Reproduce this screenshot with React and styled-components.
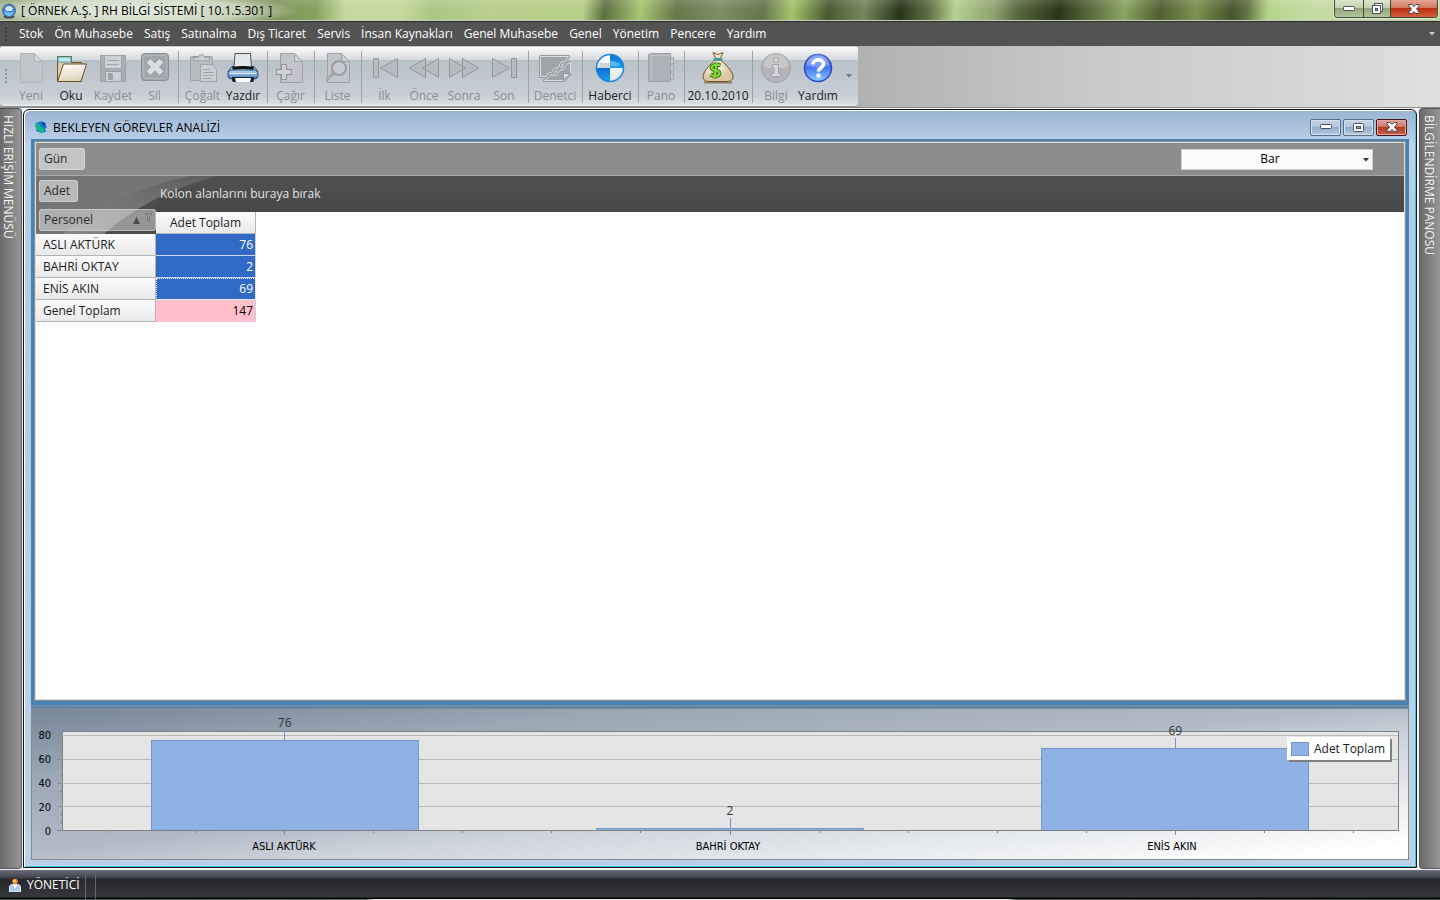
import React from "react";
import styled, { createGlobalStyle, css } from "styled-components";

const GlobalStyle = createGlobalStyle`
  *, *::before, *::after { box-sizing: border-box; }
  body { margin: 0; font: 12px/16px "Open Sans", sans-serif; color: #1c1c1c; }
  button, select { font: inherit; color: inherit; }
  button { padding: 0; border: 0; background: none; }
  svg { display: block; flex: none; }
`;

/* ---------- data ---------- */

const MENU = [
  "Stok", "Ön Muhasebe", "Satış", "Satınalma", "Dış Ticaret", "Servis",
  "İnsan Kaynakları", "Genel Muhasebe", "Genel", "Yönetim", "Pencere", "Yardım",
];

const ROWS = [
  { name: "ASLI AKTÜRK", value: 76 },
  { name: "BAHRİ OKTAY", value: 2 },
  { name: "ENİS AKIN", value: 69, focused: true },
];

/* ---------- shell ---------- */

const Shell = styled.div`
  min-height: 100vh;
  display: flex;
  flex-direction: column;
  background: #d2d2d2;
`;

const TitleBar = styled.header`
  height: 22px;
  display: flex;
  align-items: flex-start;
  padding-right: 2px;
  border-bottom: 1px solid #2c2e28;
  box-shadow: inset 0 -1px #c3cbb8;
  background:
    radial-gradient(closest-side, rgba(255, 255, 255, 0.75), rgba(255, 255, 255, 0.5) 70%, transparent) -30px -6px / 330px 34px no-repeat,
    linear-gradient(rgba(255, 255, 255, 0.12), transparent 50%),
    linear-gradient(97deg,
      #93a57a 0, #a5b58a 12%, #7d945c 19%, #86a25c 22%, #c5da9c 24%, #c5da9c 28%, #aac884 30%, #b8d08c 34%,
      #b6cf88 40.5%, #5b7040 42%, #a9c674 44.5%, #66784a 47%, #7e8e66 50%, #65764c 53%, #a5c56c 55%, #4a5a32 57.5%,
      #75885a 60%, #29341a 62.5%, #5e7044 64.5%, #b4d28e 66.3%, #8fa272 69%, #5a6a40 70.6%, #2b3418 73.5%, #55663a 75.5%,
      #8ba662 78%, #525f32 80.5%, #7c9250 83%, #48552e 85.5%, #5f7040 86.5%, #b4d48a 88%, #c6dca6 91%, #bcd69a 100%);
`;

const AppTitle = styled.h1`
  display: flex;
  align-items: center;
  gap: 4px;
  margin: 0;
  padding: 2px 0 0 1px;
  font-size: 12px;
  line-height: 18px;
  font-weight: 400;
  color: #000;
`;

const AppControls = styled.div`
  display: flex;
  margin-left: auto;
  border: 1px solid #40483a;
  border-top: 0;
  border-radius: 0 0 4px 4px;
  overflow: hidden;
  box-shadow: 0 0 0 1px rgba(255, 255, 255, 0.5);
`;

const AppControl = styled.button`
  width: ${(p) => p.$w}px;
  height: 17px;
  display: grid;
  place-items: center;
  border-left: ${(p) => (p.$first ? 0 : "1px solid #40483a")};
  background: ${(p) =>
    p.$close
      ? "linear-gradient(#e5a795, #d27860 45%, #bb2f12 50%, #d8603c)"
      : "linear-gradient(#dbe7cb, #c3d2ae 45%, #94a67c 50%, #b0c698)"};
`;

const MenuBar = styled.nav`
  height: 24px;
  display: flex;
  align-items: center;
  padding: 0 5px 0 4px;
  background: #535353;
`;

const MenuList = styled.ul`
  display: flex;
  gap: 11px;
  flex: 1;
  margin: 0;
  padding: 0 0 0 12px;
  list-style: none;
`;

const MenuItem = styled.button`
  font-size: 12px;
  line-height: 16px;
  white-space: nowrap;
  color: #fff;
`;

const ToolArea = styled.div`
  height: 62px;
  display: flex;
  background: linear-gradient(90deg, #adadad 0, #b2b2b2 60%, #cacaca 77%, #dfdfdf 100%);
  border-bottom: 1px solid #8b8b8b;
`;

const ToolStrip = styled.div`
  display: flex;
  align-items: stretch;
  border-radius: 4px;
  border-bottom: 1px solid #8a9096;
  background: linear-gradient(#c8c8c8 1px, #ffffff 1px, #f3f4f5 3px, #d6d9dd 14px, #b9c1c9 14px, #c8ced4 49px, #d9dfe1 58px, #eef0f1);
`;

const Grip = styled.span`
  width: ${(p) => p.$w}px;
  height: 16px;
  align-self: center;
  background: radial-gradient(circle, ${(p) => p.$color} 1px, transparent 1px) 0 0 / 4px 4px repeat-y;
  margin-left: ${(p) => p.$ml || 0}px;
`;

const ToolButton = styled.button`
  width: ${(p) => p.$w}px;
  display: flex;
  flex-direction: column;
  align-items: center;
  padding-top: 6px;
  gap: 4px;
  font-size: 12px;
  line-height: 16px;
  white-space: nowrap;
  color: #1e2226;
  &:disabled { color: #8b8f94; }
`;

const ToolSeparator = styled.span`
  width: 1px;
  height: 52px;
  margin: 5px 3px 0 4px;
  background: #9da2a8;
`;

const Overflow = styled.button`
  width: 18px;
  display: grid;
  place-items: center;
`;

/* ---------- desktop ---------- */

const Desktop = styled.main`
  flex: 1;
  display: flex;
  gap: 1px;
  background: #f4f4f4;
`;

const SideTab = styled.button`
  width: ${(p) => (p.$right ? 21 : 22)}px;
  margin-bottom: 1px;
  padding: ${(p) => (p.$right ? "6px 2px 0 0" : "6px 6px 0 0")};
  display: flex;
  justify-content: flex-start;
  align-items: center;
  writing-mode: vertical-rl;
  font-size: 12px;
  line-height: 14px;
  color: #f5f5f5;
  border: 1px solid #555;
  border-width: ${(p) => (p.$right ? "1px 0 1px 1px" : "1px 1px 1px 0")};
  border-radius: ${(p) => (p.$right ? "4px 0 0 4px" : "0 4px 4px 0")};
  background: linear-gradient(90deg, #6a6a6a, #969696);
`;

const Window = styled.section`
  flex: 1;
  min-width: 0;
  display: flex;
  flex-direction: column;
  margin: 1px 1px 2px 0;
  padding: 0 7px 7px;
  border: 1px solid #141414;
  border-radius: 6px 6px 0 0;
  box-shadow: inset 1px 1px #fff, inset -1px -1px #35c8dc;
  background: linear-gradient(#9ab4d1, #bdd2ea 34px, #b3cbe6 120px, #b9d1ea);
`;

const WindowTitle = styled.div`
  height: 29px;
  display: flex;
  align-items: center;
  padding: 5px 2px 0 3px;
  h2 {
    margin: 0 auto 0 5px;
    padding-top: 2px;
    font-size: 12px;
    line-height: 16px;
    font-weight: 400;
    color: #000;
  }
`;

const WindowControls = styled.div`
  display: flex;
  gap: 2px;
`;

const WindowControl = styled.button`
  width: 31px;
  height: 17px;
  display: grid;
  place-items: center;
  border-radius: 2px;
  border: 1px solid ${(p) => (p.$close ? "#4c1418" : "#5a6c86")};
  box-shadow: inset 0 0 0 1px ${(p) => (p.$close ? "#e0a8a0" : "#d5e2f0")};
  background: ${(p) =>
    p.$close
      ? "linear-gradient(#e3a59a, #cf7466 45%, #b03a24 50%, #c96452)"
      : "linear-gradient(#c2d3e6, #b2c8df 45%, #94aecb 50%, #b4cbe3)"};
`;

/* ---------- pivot ---------- */

const PivotFrame = styled.div`
  flex: 1;
  display: flex;
  flex-direction: column;
  border: solid #4682b4;
  border-width: 2px 3px 4px;
`;

const Splitter = styled.div`
  height: 3px;
  border-bottom: 1px solid #4682b4;
  background: conic-gradient(#9a9a9a 25%, #4682b4 0 50%, #9a9a9a 0 75%, #4682b4 0) 0 0 / 2px 2px;
`;

const Pivot = styled.div`
  flex: 1;
  border: 1px solid #8e8e8e;
  box-shadow: inset 0 0 0 1px #dcdcdc;
  padding: 1px;
  background: #fff;
`;

const FilterBar = styled.div`
  height: 33px;
  display: flex;
  align-items: center;
  justify-content: space-between;
  padding: 0 31px 0 3px;
  border-bottom: 1px solid #a8a8a8;
  background: #8d8d8d;
`;

const FieldButton = styled.button`
  width: ${(p) => p.$w}px;
  height: 22px;
  display: flex;
  align-items: center;
  padding: 0 4px;
  border: 1px solid rgba(225, 225, 225, 0.5);
  border-radius: 3px;
  background: ${(p) => p.$bg};
  color: #2b2b2b;
`;

const SelectWrap = styled.label`
  position: relative;
  display: block;
  svg { position: absolute; right: 4px; top: 9px; pointer-events: none; }
`;

const ChartSelect = styled.select`
  display: block;
  width: 192px;
  height: 21px;
  appearance: none;
  border: 1px solid #cfcfcf;
  border-radius: 0;
  background: #fbfbfb;
  text-align-last: center;
  padding: 0 14px 0 0;
  color: #000;
`;

const PivotBody = styled.div`
  position: relative;
`;

const Swoosh = styled.svg`
  position: absolute;
  left: 0;
  top: 0;
  pointer-events: none;
`;

const ColumnBand = styled.div`
  height: 36px;
  display: flex;
  background: linear-gradient(#505050, #484848);
  color: #e2e2e2;
`;

const DataArea = styled.div`
  position: relative;
  width: 120px;
  padding: 4px 0 0 3px;
`;

const BandHint = styled.p`
  position: relative;
  margin: 0;
  padding: 10px 4px;
`;

const PivotTable = styled.table`
  position: relative;
  width: 220px;
  table-layout: fixed;
  border-collapse: separate;
  border-spacing: 0;
  th, td { height: 22px; padding: 0; line-height: 16px; font-weight: 400; }
`;

const CornerCell = styled.th`
  width: 120px;
  vertical-align: top;
  ${FieldButton} { margin: -3px 0 0 3px; gap: 5px; padding-right: 3px; }
  ${FieldButton} span { margin-right: auto; }
  ${FieldButton} svg:last-child { margin-bottom: 6px; }
`;

const headerLook = css`
  border: solid #b4b4b4;
  border-width: 0 1px 1px 0;
  background: linear-gradient(#fbfbfb, #e9e9e9);
  color: #1c1c1c;
`;

const ColumnHead = styled.th`
  ${headerLook}
  text-align: center;
`;

const RowHead = styled.th`
  ${headerLook}
  && { padding-left: 7px; }
  text-align: left;
`;

const Cell = styled.td`
  text-align: right;
  && { padding-right: 2px; }
  border-bottom: 1px solid ${(p) => (p.$total ? "#ffc0cb" : "#c9d6ea")};
  border-right: 1px solid #c4cfe0;
  background: ${(p) => (p.$total ? "#ffc0cb" : "#316ac5")};
  color: ${(p) => (p.$total ? "#000" : "#fff")};
  ${(p) => p.$focused && "outline: 1px dotted #fff; outline-offset: -1px;"}
`;

/* ---------- chart ---------- */

const ChartPanel = styled.figure`
  height: 152px;
  margin: 0;
  padding: 22px 10px 0 0;
  display: grid;
  grid-template-columns: 30px 1fr;
  grid-template-rows: 100px 1fr;
  position: relative;
  border: 1px solid #8a8a8a;
  background: linear-gradient(to bottom right, #778899 0, #9aa7b5 22%, #b3bbc8 48%, #ced4dc 60%, #ffffff 96%);
  font-size: 11px;
`;

const AxisLabels = styled.div`
  display: flex;
  flex-direction: column-reverse;
  justify-content: space-between;
  margin: -3px 0 -9px;
  padding-right: 11px;
  text-align: right;
  line-height: 16px;
  font-family: "DejaVu Sans Condensed", "DejaVu Sans", sans-serif;
  color: #000;
`;

const Plot = styled.svg`
  width: 100%;
  height: 100px;
  overflow: visible;
  shape-rendering: crispEdges;
  text { font: 12px "Open Sans", sans-serif; fill: #333; text-anchor: middle; }
`;

const Categories = styled.div`
  grid-column: 2;
  display: grid;
  grid-template-columns: repeat(3, 1fr);
  padding: 8px 4px 0 0;
  text-align: center;
  line-height: 16px;
  font-family: "DejaVu Sans Condensed", "DejaVu Sans", sans-serif;
  color: #000;
`;

const Legend = styled.figcaption`
  position: absolute;
  right: 18px;
  top: 28px;
  display: flex;
  align-items: center;
  gap: 5px;
  height: 23px;
  padding: 0 5px 0 4px;
  background: #fff;
  box-shadow: 2px 2px #808080;
  font-size: 12px;
  line-height: 16px;
`;

const Swatch = styled.span`
  width: 18px;
  height: 14px;
  border: 1px solid #7596c8;
  background: #8fb2e6;
`;

/* ---------- status ---------- */

const StatusBar = styled.footer`
  height: 30px;
  display: flex;
  align-items: stretch;
  padding-left: 8px;
  border-bottom: 1px solid;
  border-image: linear-gradient(90deg, #4d524c 0, #6f7470 25.5%, #eee 26%, #eee 70%, #556052 70.5%, #3c443a) 1;
  border-width: 0 0 1px;
  background: linear-gradient(#6b6b78, #3d3f48 8px, #26272a 9px, #37383c 27px, #000 28px);
`;

const StatusItem = styled.div`
  display: flex;
  align-items: center;
  gap: 5px;
  padding: 0 5px 0 0;
  border-right: 1px solid #66676b;
  color: #fff;
`;

const StatusGap = styled.span`
  width: 10px;
  border-right: 1px solid #66676b;
`;

/* ---------- icons ---------- */

const Icon = ({ size = 32, children }) => (
  <svg width={size} height={size} viewBox={`0 0 ${size} ${size}`} aria-hidden="true">{children}</svg>
);

const off = { fill: "#b9bcc0", stroke: "#9fa2a6", strokeWidth: 1 };
const pale = { fill: "#cdd0d3", stroke: "#a0a3a7", strokeWidth: 1 };

const NewIcon = () => (
  <Icon><path {...off} fill="#c3c5c8" stroke="#b2b5b8" d="M5.500 1.500h14l8 8v21h-22z" /><path fill="#d5d7d9" stroke="#b0b3b6" d="M19.500 1.500v8h8z" /></Icon>
);

const OpenIcon = () => (
  <Icon>
    <defs>
      <linearGradient id="folder" x1="0" y1="0" x2="0.300" y2="1"><stop offset="0" stopColor="#fff" /><stop offset="1" stopColor="#e3d6bd" /></linearGradient>
    </defs>
    <path d="M2.500 29.500v-25h14v6h10v19z" fill="#d9ccb3" stroke="#6f5224" />
    <path d="M3 5h13v5H3z" fill="#bfe9ec" stroke="#4ea6ae" />
    <path d="M2.500 29.500l6-17.500h23l-5.500 17.500z" fill="url(#folder)" stroke="#6b4d1e" strokeLinejoin="round" />
  </Icon>
);

const SaveIcon = () => (
  <Icon>
    <path {...off} fill="#abaeb2" d="M3.500 3.500h25v26h-25z" />
    <path fill="#cfd1d4" stroke="#a4a7aa" d="M7.500 3.500h17v13h-17z" />
    <path stroke="#a4a7aa" d="M10 8.500h12M10 12.500h12" />
    <path fill="#cfd1d4" stroke="#9b9ea2" d="M8.500 19.500h16v10h-16z" /><path fill="#a0a3a7" d="M11 21h5v7h-5z" />
  </Icon>
);

const DeleteIcon = () => (
  <Icon>
    <rect x="2.500" y="1.500" width="27" height="27" rx="3" fill="#a4a7aa" stroke="#8c8f93" />
    <rect x="4.500" y="3.500" width="23" height="23" rx="1" fill="none" stroke="#b6b9bb" />
    <path fill="#dcdee0" stroke="#9a9da1" d="M7 10.500l4.500-4 4.500 4.500 4.500-4.500 4.500 4-4.500 4.500 4.500 4.500-4.500 4-4.500-4.500-4.500 4.500-4.500-4 4.500-4.500z" />
  </Icon>
);

const CopyIcon = () => (
  <Icon>
    <rect {...off} x="3.500" y="4.500" width="22" height="24" rx="1" />
    <path {...pale} d="M6.500 8.500v-3h5a3 3 0 0 1 6 0h5v3z" />
    <path {...pale} d="M13.500 12.500h11l5 5v12h-16z" />
    <path stroke="#a0a3a7" d="M16 17.500h7M16 20.500h11M16 23.500h11M16 26.500h8" />
  </Icon>
);

const PrintIcon = () => (
  <Icon>
    <defs><linearGradient id="printer" x1="0" y1="0" x2="0" y2="1"><stop offset="0" stopColor="#c2d9f2" /><stop offset="1" stopColor="#3e7cc2" /></linearGradient></defs>
    <path d="M5 14.500h22l4 5H1z" fill="#a9c8ec" stroke="#2a4c74" />
    <path d="M8 1.500h15.500l1 14H7z" fill="#e6e7e9" stroke="#4f5358" />
    <path d="M5.500 16.500q10.500-2 21 0" fill="none" stroke="#0f1113" strokeWidth="3" />
    <path d="M1 22q0-4 5-4h20q5 0 5 4v2q0 3-4 3H5q-4 0-4-3z" fill="url(#printer)" stroke="#23507f" />
    <path d="M5 25h22v3q0 2-3 2H8q-3 0-3-2z" fill="#1d1f22" />
    <path d="M8 26h16l-1 4H9z" fill="#f7f8f9" />
    <path d="M3 21.500h26" stroke="#e3effb" />
  </Icon>
);

const CallIcon = () => (
  <Icon>
    <path {...off} fill="#c3c5c8" d="M5.500 1.500h14l8 8v21h-22z" /><path {...pale} d="M19.500 1.500v8h8z" />
    <path fill="#d0d2d4" stroke="#8f9296" d="M6.500 12.500h5v5h5v5h-5v5h-5v-5h-5v-5h5z" />
  </Icon>
);

const ListIcon = () => (
  <Icon>
    <path {...off} fill="#c3c5c8" d="M5.500 1.500h14l8 8v21h-22z" /><path {...pale} d="M19.500 1.500v8h8z" />
    <path d="M13 20l-8.500 8" stroke="#999ca0" strokeWidth="3" /><path d="M13 20l-8.500 8" stroke="#c8cacd" />
    <circle cx="17" cy="16" r="7" fill="#c8cacd" stroke="#999ca0" strokeWidth="2" />
  </Icon>
);

const nav = { fill: "#b9bcbf", stroke: "#94989d", strokeWidth: 1, strokeLinejoin: "round" };
const FirstIcon = () => <Icon><path {...nav} d="M4.500 6.500h5v19h-5zM11.500 16l17-9.500v19z" /></Icon>;
const PrevIcon = () => <Icon><path {...nav} d="M1.500 16l16-9.500v19zM14.500 16l16-9.500v19z" /></Icon>;
const NextIcon = () => <Icon><path {...nav} d="M17.500 16l-16-9.500v19zM30.500 16l-16-9.500v19z" /></Icon>;
const LastIcon = () => <Icon><path {...nav} d="M28.500 6.500h-5v19h5zM21.500 16l-17-9.500v19z" /></Icon>;

const torn = ["M1.500 4.500h28l-3 5-5 1-2 5-4 1-3 4-4 1-1 3h-6z", "M31.500 10v11l-7 7.500h-19l4-3 2-3 5 1 4-5 4-1 3-5z"];
const AuditIcon = () => (
  <Icon>
    {torn.map((d) => (
      <React.Fragment key={d}>
        <path d={d} fill="#9fa2a5" stroke="#94979b" strokeWidth="3" strokeLinejoin="round" />
        <path d={d} fill="#a2a5a8" stroke="#dcdee0" strokeLinejoin="round" />
      </React.Fragment>
    ))}
    <path d="M24.500 28v-6.500h7z" fill="#dcdee0" stroke="#94979b" />
  </Icon>
);

const MessengerIcon = () => (
  <Icon>
    <defs>
      <linearGradient id="msgWhite" x1="0" y1="0" x2="0" y2="1"><stop offset="0" stopColor="#fff" /><stop offset="1" stopColor="#dfe6ec" /></linearGradient>
      <linearGradient id="msgBlue" x1="0" y1="0" x2="0" y2="1"><stop offset="0" stopColor="#0c6fd0" /><stop offset="1" stopColor="#19a3f5" /></linearGradient>
    </defs>
    <circle cx="16" cy="16" r="14" fill="url(#msgWhite)" />
    <path d="M16 2a14 14 0 0 1 14 14H16z" fill="url(#msgBlue)" />
    <path d="M16 30A14 14 0 0 1 2 16h14z" fill="url(#msgBlue)" />
    <path d="M6 11h10v5H5z" fill="#cfd3d7" />
    <circle cx="16" cy="16" r="13.500" fill="none" stroke="#1b84dc" strokeWidth="1.500" />
    <path d="M16 9q6 0 10 3l-1 2h-9z" fill="#fff" opacity="0.300" />
  </Icon>
);

const BoardIcon = () => (
  <Icon>
    <path fill="#c9cbce" stroke="#a4a7ab" d="M25.500 5.500h3v6h-3zM25.500 13.500h3v6h-3zM25.500 21.500h3v6h-3z" />
    <path fill="#aeb1b5" stroke="#9da0a4" d="M3.500 2.500l2-1h20v27l-2 1h-20z" /><path stroke="#c4c6c9" d="M5 3.500h20M6.500 4v25" />
  </Icon>
);

const MoneyIcon = () => (
  <Icon>
    <defs><radialGradient id="sack" cx="0.400" cy="0.350"><stop offset="0" stopColor="#fffdf4" /><stop offset="1" stopColor="#dcc8a0" /></radialGradient></defs>
    <path d="M2 30.500h28" stroke="#7a6033" strokeWidth="2" opacity="0.700" />
    <path d="M11 .500l5 2 5-2-2.500 6h-5z" fill="#f1e6cc" stroke="#7a5a2a" />
    <path d="M13 8c-3 4-12 10-12 17 0 3 3 4.500 6 4.500h18c4 0 6-2 6-4.500 0-7-9-13-12-17z" fill="url(#sack)" stroke="#6b4e22" />
    <path d="M11.500 7.500h9" stroke="#3aa3a0" strokeWidth="2.500" />
    <path d="M18.500 13.500c-5-2-9 0-9 2.500s8 2 8 5-5 4-9 1.500M14.500 10.500l-2 16" fill="none" stroke="#2c7a10" strokeWidth="4" />
    <path d="M18.500 13.500c-5-2-9 0-9 2.500s8 2 8 5-5 4-9 1.500M14.500 10.500l-2 16" fill="none" stroke="#8ed63c" strokeWidth="2" />
  </Icon>
);

const InfoIcon = () => (
  <Icon>
    <circle cx="16" cy="16" r="14.500" fill="#b4b6b9" stroke="#a0a3a6" />
    <path d="M4 14a12 12 0 0 1 24 0q-12 5-24 0z" fill="#c6c8ca" />
    <circle cx="16" cy="8" r="2.500" fill="#d6d8da" stroke="#a2a5a8" /><path d="M12.500 12.500h6v9h2v3h-9v-3h2.500v-6h-1.500z" fill="#d6d8da" stroke="#a2a5a8" />
  </Icon>
);

const HelpIcon = () => (
  <Icon>
    <defs><linearGradient id="help" x1="0" y1="0" x2="0" y2="1"><stop offset="0" stopColor="#6f93f5" /><stop offset="0.500" stopColor="#4575ee" /><stop offset="1" stopColor="#8fd0ff" /></linearGradient></defs>
    <circle cx="16" cy="16" r="13.500" fill="url(#help)" stroke="#2a49c8" strokeWidth="1.500" />
    <path d="M5 13a11 11 0 0 1 22 0q-11 5-22 0z" fill="#fff" opacity="0.250" />
    <path d="M11 12.500c0-6.500 10.500-6 10.500-.5 0 4-5 3.500-5 7.500" fill="none" stroke="#fff" strokeWidth="3.500" />
    <circle cx="16.500" cy="23.500" r="2.200" fill="#fff" />
  </Icon>
);

const AppIcon = () => (
  <Icon size={16}>
    <ellipse cx="8" cy="13.500" rx="5.500" ry="2" fill="#40424a" />
    <circle cx="8" cy="7.500" r="6.500" fill="#2f7fd8" stroke="#5a6c88" />
    <path d="M3 8q5 3 10 0-1 5-5 5T3 8z" fill="#7cc4f8" />
    <path d="M4 5q4-4 8 0l-1 3H5z" fill="#fff" opacity="0.800" />
  </Icon>
);

const GlobeIcon = () => (
  <Icon size={14}>
    <path d="M7 1l2 1 3 1-1 2 2 2-2 2 1 3-3 0-2 1-2-1-3-1 1-3-2-2 2-2-1-2 3 0z" fill="#1676d8" />
    <path d="M1 4l3-2 2 4 4 3 0 4-4-1-4-4z" fill="#17b884" />
    <path d="M8 2l3 1 1 4-4-2z" fill="#0b50a8" />
  </Icon>
);

const UserIcon = () => (
  <Icon size={14}>
    <path d="M1.500 15V9q0-2.500 3-2.500h5q3 0 3 2.500v5h-11z" fill="#a9cdf4" stroke="#e3effb" />
    <path d="M5 7l2 4 2-4z" fill="#fff" />
    <circle cx="7" cy="3.500" r="2.800" fill="#e38a35" /><circle cx="6.500" cy="3" r="1.200" fill="#ffd09a" />
  </Icon>
);

const Chevron = ({ color }) => (
  <svg width="6" height="4" viewBox="0 0 6 4" aria-hidden="true"><path d="M0 0h6L3 3.500z" fill={color} /></svg>
);

const MinGlyph = () => (
  <svg width="12" height="6" viewBox="0 0 12 6" aria-hidden="true"><rect x="0.500" y="0.500" width="11" height="4" rx="1" fill="#fff" stroke="#4b5060" /></svg>
);
const MaxGlyph = () => (
  <svg width="12" height="9" viewBox="0 0 12 9" aria-hidden="true"><rect x="0.500" y="0.500" width="10" height="8" rx="1" fill="#fff" stroke="#4b5060" /><rect x="3.500" y="3.500" width="4" height="2" fill="#8aa" stroke="#4b5060" /></svg>
);
const RestoreGlyph = () => (
  <svg width="13" height="12" viewBox="0 0 13 12" aria-hidden="true">
    <rect x="3.500" y="0.500" width="8" height="8" fill="#fff" stroke="#4b5060" />
    <rect x="1.500" y="2.500" width="8" height="8" fill="#fff" stroke="#4b5060" /><rect x="4.500" y="5.500" width="2" height="2" fill="#9ab" stroke="#4b5060" />
  </svg>
);
const CloseGlyph = () => (
  <svg width="12" height="10" viewBox="0 0 12 10" aria-hidden="true"><path d="M1 .500h3l2 2 2-2h3v1.500L8.500 5 11 8v1.500H8l-2-2-2 2H1V8l2.500-3L1 2z" fill="#fff" stroke="#4b4450" /></svg>
);

/* ---------- toolbar layout ---------- */

const TOOLS = [
  [
    { label: "Yeni", w: 40, icon: NewIcon, disabled: true },
    { label: "Oku", w: 40, icon: OpenIcon },
    { label: "Kaydet", w: 44, icon: SaveIcon, disabled: true },
    { label: "Sil", w: 39, icon: DeleteIcon, disabled: true },
  ],
  [
    { label: "Çoğalt", w: 41, icon: CopyIcon, disabled: true },
    { label: "Yazdır", w: 40, icon: PrintIcon },
  ],
  [{ label: "Çağır", w: 39, icon: CallIcon, disabled: true }],
  [{ label: "Liste", w: 39, icon: ListIcon, disabled: true }],
  [
    { label: "İlk", w: 39, icon: FirstIcon, disabled: true },
    { label: "Önce", w: 40, icon: PrevIcon, disabled: true },
    { label: "Sonra", w: 40, icon: NextIcon, disabled: true },
    { label: "Son", w: 40, icon: LastIcon, disabled: true },
  ],
  [{ label: "Denetci", w: 46, icon: AuditIcon, disabled: true }],
  [{ label: "Haberci", w: 48, icon: MessengerIcon }],
  [{ label: "Pano", w: 38, icon: BoardIcon, disabled: true }],
  [{ label: "20.10.2010", w: 60, icon: MoneyIcon }],
  [
    { label: "Bilgi", w: 40, icon: InfoIcon, disabled: true },
    { label: "Yardım", w: 44, icon: HelpIcon },
  ],
];

/* ---------- chart ---------- */

const Y_MAX = 84;
const yOf = (v) => Math.round(99 - (v / Y_MAX) * 99.5);
const pct = (n) => `${n * 100}%`;

function BarPlot() {
  const minorY = Array.from({ length: 13 }, (_, i) => (i * 20) / 3);
  return (
    <Plot role="img" aria-label="Adet Toplam">
      <rect width="100%" height="99" y="0" fill="#e5e5e5" stroke="#7f7f7f" />
      {[20, 40, 60, 80].map((v) => (
        <line key={v} x1="0" x2="100%" y1={yOf(v)} y2={yOf(v)} stroke="#b9b9b9" />
      ))}
      {minorY.map((v, i) => (
        <line key={i} x1={i % 3 === 0 ? -5 : -2} x2="0" y1={yOf(v)} y2={yOf(v)} stroke="#8a8a8a" />
      ))}
      {ROWS.map((r, i) => (
        <React.Fragment key={r.name}>
          <rect x={pct((i + 0.2) / 3)} width="20%" y={yOf(r.value)} height={99 - yOf(r.value)} fill="#8fb2e6" stroke="#7596c8" />
          <line x1={pct((i + 0.5) / 3)} x2={pct((i + 0.5) / 3)} y1={yOf(r.value) - 10} y2={yOf(r.value)} stroke="#7596c8" />
          <text x={pct((i + 0.5) / 3)} y={yOf(r.value) - 13}>{r.value}</text>
        </React.Fragment>
      ))}
      <line x1="0" x2="100%" y1="99" y2="99" stroke="#7f7f7f" />
      {Array.from({ length: 15 }, (_, i) => (
        <line key={i} x1={pct((i + 0.5) / 15)} x2={pct((i + 0.5) / 15)} y1="99" y2={i % 5 === 2 ? 104 : 102} stroke="#8a8a8a" />
      ))}
    </Plot>
  );
}

/* ---------- app ---------- */

export default function App() {
  return (
    <Shell>
      <GlobalStyle />
      <TitleBar>
        <AppTitle><AppIcon />[ ÖRNEK A.Ş. ] RH BİLGİ SİSTEMİ [ 10.1.5.301 ]</AppTitle>
        <AppControls>
          <AppControl $first $w={28} aria-label="Simge durumuna küçült"><MinGlyph /></AppControl>
          <AppControl $w={27} aria-label="Önceki boyut"><RestoreGlyph /></AppControl>
          <AppControl $w={47} $close aria-label="Kapat"><CloseGlyph /></AppControl>
        </AppControls>
      </TitleBar>

      <MenuBar>
        <Grip $w={3} $color="#3a3a3a" />
        <MenuList>
          {MENU.map((m) => <li key={m}><MenuItem>{m}</MenuItem></li>)}
        </MenuList>
        <Chevron color="#c8c8d8" />
      </MenuBar>

      <ToolArea>
        <ToolStrip role="toolbar">
          <Grip $w={7} $ml={4} $color="#8f959c" />
          {TOOLS.map((group, gi) => (
            <React.Fragment key={gi}>
              {gi > 0 && <ToolSeparator />}
              {group.map(({ label, w, icon: Glyph, disabled }) => (
                <ToolButton key={label} $w={w} disabled={disabled}><Glyph />{label}</ToolButton>
              ))}
            </React.Fragment>
          ))}
          <Overflow aria-label="Diğer"><Chevron color="#70767e" /></Overflow>
        </ToolStrip>
      </ToolArea>

      <Desktop>
        <SideTab>HIZLI ERİŞİM MENÜSÜ</SideTab>
        <Window>
          <WindowTitle>
            <GlobeIcon />
            <h2>BEKLEYEN GÖREVLER ANALİZİ</h2>
            <WindowControls>
              <WindowControl aria-label="Küçült"><MinGlyph /></WindowControl>
              <WindowControl aria-label="Büyüt"><MaxGlyph /></WindowControl>
              <WindowControl $close aria-label="Pencereyi kapat"><CloseGlyph /></WindowControl>
            </WindowControls>
          </WindowTitle>

          <PivotFrame>
            <Pivot>
              <FilterBar>
                <FieldButton $w={46} $bg="#c4c4c4">Gün</FieldButton>
                <SelectWrap>
                  <ChartSelect aria-label="Grafik türü" defaultValue="Bar"><option>Bar</option></ChartSelect>
                  <Chevron color="#333" />
                </SelectWrap>
              </FilterBar>
              <PivotBody>
                <ColumnBand>
                  <Swoosh width="240" height="58" viewBox="0 0 240 58" aria-hidden="true">
                    <defs>
                      <linearGradient id="arc" x1="0" y1="1" x2="1" y2="0"><stop offset="0" stopColor="#8a8a8a" /><stop offset="1" stopColor="#5e5e5e" /></linearGradient>
                    </defs>
                    <path d="M0 0h120v58H0z" fill="#4b4b4b" />
                    <path d="M0 0h180Q110 20 68 58H0z" fill="url(#arc)" />
                    <path d="M0 0h154Q80 16 26 58H0z" fill="#757575" />
                  </Swoosh>
                  <DataArea><FieldButton $w={39} $bg="#b9b9b9">Adet</FieldButton></DataArea>
                  <BandHint>Kolon alanlarını buraya bırak</BandHint>
                </ColumnBand>
                <PivotTable>
                  <thead>
                    <tr>
                      <CornerCell>
                        <FieldButton $w={117} $bg="rgba(255, 255, 255, 0.42)">
                          <span>Personel</span>
                          <svg width="7" height="7" viewBox="0 0 7 7" aria-hidden="true"><path d="M3.500 0L7 7H0z" fill="#4a4a4a" /></svg>
                          <svg width="7" height="8" viewBox="0 0 7 8" aria-hidden="true"><path d="M.500 .500h6v1l-2 2v4h-2v-4l-2-2z" fill="#999" stroke="#777" /></svg>
                        </FieldButton>
                      </CornerCell>
                      <ColumnHead scope="col">Adet Toplam</ColumnHead>
                    </tr>
                  </thead>
                  <tbody>
                    {ROWS.map((r) => (
                      <tr key={r.name}>
                        <RowHead scope="row">{r.name}</RowHead>
                        <Cell $focused={r.focused}>{r.value}</Cell>
                      </tr>
                    ))}
                    <tr>
                      <RowHead scope="row">Genel Toplam</RowHead>
                      <Cell $total>147</Cell>
                    </tr>
                  </tbody>
                </PivotTable>
              </PivotBody>
            </Pivot>
          </PivotFrame>
          <Splitter />

          <ChartPanel>
            <AxisLabels>{[0, 20, 40, 60, 80].map((v) => <span key={v}>{v}</span>)}</AxisLabels>
            <BarPlot />
            <Categories>{ROWS.map((r) => <span key={r.name}>{r.name}</span>)}</Categories>
            <Legend><Swatch />Adet Toplam</Legend>
          </ChartPanel>
        </Window>
        <SideTab $right>BİLGİLENDİRME PANOSU</SideTab>
      </Desktop>

      <StatusBar>
        <StatusItem><UserIcon />YÖNETİCİ</StatusItem>
        <StatusGap />
      </StatusBar>
    </Shell>
  );
}
